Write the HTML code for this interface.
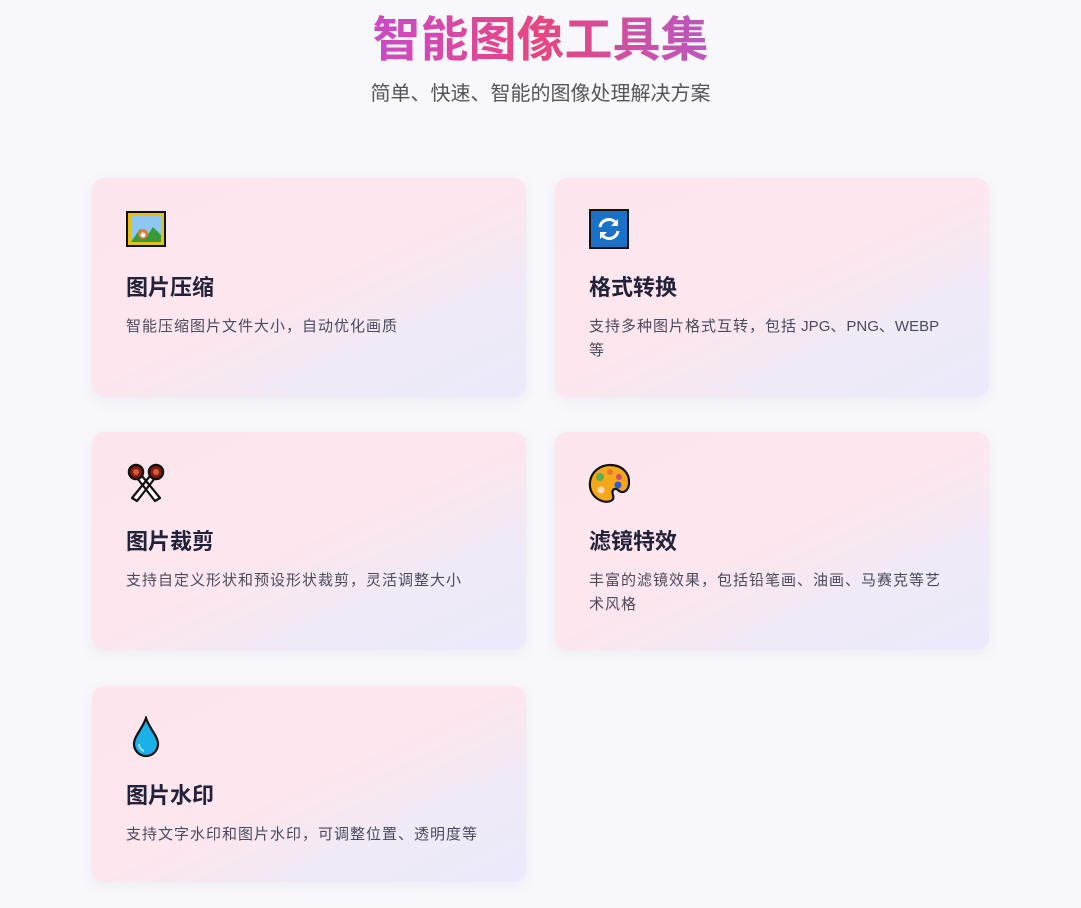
<!DOCTYPE html>
<html><head><meta charset="utf-8"><style>
*{margin:0;padding:0;box-sizing:border-box}
body{width:1081px;height:908px;background:#f8f7fb;font-family:"Liberation Sans","Noto Sans CJK SC",sans-serif;overflow:hidden;position:relative}
h1{position:absolute;top:10px;left:0;width:1081px;text-align:center;font-size:48px;font-weight:bold;line-height:62px}
h1 span{background:linear-gradient(90deg,#c94bc8,#e8457f 50%,#b759c0);-webkit-background-clip:text;background-clip:text;color:transparent}
.sub{position:absolute;top:80px;left:0;width:1081px;text-align:center;font-size:20px;color:#555;line-height:28px}
.card{position:absolute;width:434px;border-radius:12px;background:linear-gradient(155deg,#fde5ee 0%,#fde6ee 50%,#eeeaf6 75%,#ece9fb 100%);box-shadow:0 4px 14px rgba(120,100,160,0.08);padding:30px 34px}
.card svg{display:block;width:42px;height:42px;margin-left:-1px}
.card h3{margin-top:23px;font-size:22px;font-weight:bold;color:#22223a;line-height:30px}
.card p{margin-top:12px;font-size:15px;letter-spacing:1px;width:356px;color:#4a4a5e;line-height:24px}
.card p i{font-style:normal;letter-spacing:0}
</style></head><body>
<h1><span>智能图像工具集</span></h1>
<div class="sub">简单、快速、智能的图像处理解决方案</div>

<div class="card" style="left:92px;top:178px;height:219px">
<svg viewBox="0 0 42 42"><rect x="1" y="3" width="40" height="36" fill="#111"/><rect x="3" y="5" width="36" height="32" fill="#e0c21a"/><rect x="6" y="8" width="30" height="26" fill="#8ec8f0"/><path d="M6 34 L15 21 L22 28 L28 19 L36 27 L36 34Z" fill="#3a9a3a"/><circle cx="18" cy="26" r="5" fill="#e07a3a"/><circle cx="18" cy="27" r="2.5" fill="#fff"/></svg>
<h3>图片压缩</h3><p>智能压缩图片文件大小，自动优化画质</p></div>

<div class="card" style="left:555px;top:178px;height:219px">
<svg viewBox="0 0 42 42"><rect x="1" y="1" width="40" height="40" fill="#111"/><rect x="3" y="3" width="36" height="36" fill="#1a72c8"/><path d="M12 19 A9 9 0 0 1 28 15" stroke="#fff" stroke-width="3" fill="none"/><path d="M30 11 L30 18 L23 18Z" fill="#fff"/><path d="M30 23 A9 9 0 0 1 14 27" stroke="#fff" stroke-width="3" fill="none"/><path d="M12 31 L12 24 L19 24Z" fill="#fff"/></svg>
<h3>格式转换</h3><p>支持多种图片格式互转，包括<i> JPG</i>、<i>PNG</i>、<i>WEBP </i>等</p></div>

<div class="card" style="left:92px;top:432px;height:218px">
<svg viewBox="0 0 42 42"><path d="M12 16 L30 39 L35 36 L17 14Z M30 16 L12 39 L7 36 L25 14Z" fill="#fff" stroke="#111" stroke-width="2.2" stroke-linejoin="round"/><circle cx="11" cy="10" r="7" fill="#8a1a10" stroke="#111" stroke-width="2.5"/><circle cx="31" cy="10" r="7" fill="#8a1a10" stroke="#111" stroke-width="2.5"/><circle cx="11" cy="10" r="3" fill="#d0603a"/><circle cx="31" cy="10" r="3" fill="#d0603a"/></svg>
<h3>图片裁剪</h3><p>支持自定义形状和预设形状裁剪，灵活调整大小</p></div>

<div class="card" style="left:555px;top:432px;height:218px">
<svg viewBox="0 0 42 42"><path d="M22 3 C35 3 42 12 41 22 C40 30 34 32 30 28 C27 25 23 28 25 33 C27 39 20 41 14 39 C5 36 1 28 2 20 C3 10 12 3 22 3Z" fill="#f5a81a" stroke="#111" stroke-width="2.2"/><circle cx="12" cy="15" r="4" fill="#5bb04a"/><circle cx="22" cy="10" r="3" fill="#e07a30"/><circle cx="31" cy="15" r="3" fill="#d04a7a"/><circle cx="30" cy="23" r="3.5" fill="#2a5ad8"/><circle cx="13" cy="28" r="3.5" fill="#f9d6c0"/></svg>
<h3>滤镜特效</h3><p>丰富的滤镜效果，包括铅笔画、油画、马赛克等艺术风格</p></div>

<div class="card" style="left:92px;top:686px;height:196px">
<svg viewBox="0 0 42 42"><path d="M21 2 C24 12 33 20 33 28 A12 12 0 0 1 9 28 C9 20 18 12 21 2Z" fill="#1ab0e8" stroke="#111" stroke-width="2.2"/><path d="M14 28 A7 7 0 0 0 19 35" stroke="#9ae0fa" stroke-width="2" fill="none"/></svg>
<h3>图片水印</h3><p>支持文字水印和图片水印，可调整位置、透明度等</p></div>
</body></html>
